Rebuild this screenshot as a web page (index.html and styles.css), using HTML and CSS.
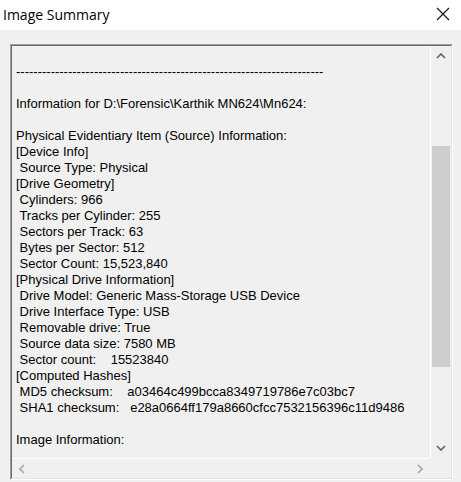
FILE: index.html
```html
<!DOCTYPE html>
<html>
<head>
<meta charset="utf-8">
<link rel="stylesheet" href="styles.css">
</head>
<body>
<div class="titlebar">
  <span class="title">Image Summary</span>
  <svg class="close" width="14" height="14" viewBox="0 0 14 14"><path d="M1 1 L13 13 M13 1 L1 13" stroke="#111" stroke-width="1.1" fill="none"/></svg>
</div>
<div class="body">
  <div class="box">
    <div class="inner">
<pre class="content">

-----------------------------------------------------------------------

Information for D:\Forensic\Karthik MN624\Mn624:

Physical Evidentiary Item (Source) Information:
[Device Info]
 Source Type: Physical
[Drive Geometry]
 Cylinders: 966
 Tracks per Cylinder: 255
 Sectors per Track: 63
 Bytes per Sector: 512
 Sector Count: 15,523,840
[Physical Drive Information]
 Drive Model: Generic Mass-Storage USB Device
 Drive Interface Type: USB
 Removable drive: True
 Source data size: 7580 MB
 Sector count:    15523840
[Computed Hashes]
 MD5 checksum:    a03464c499bcca8349719786e7c03bc7
 SHA1 checksum:   e28a0664ff179a8660cfcc7532156396c11d9486

Image Information:
</pre>
      <div class="vscroll">
        <div class="btn"><svg width="10" height="6" viewBox="0 0 10 6"><path d="M1 5 L5 1 L9 5" stroke="#606060" stroke-width="1.6" fill="none"/></svg></div>
        <div class="thumb"></div>
        <div class="btn down"><svg width="10" height="6" viewBox="0 0 10 6"><path d="M1 1 L5 5 L9 1" stroke="#606060" stroke-width="1.6" fill="none"/></svg></div>
      </div>
      <div class="hscroll">
        <div class="hbtn"><svg width="6" height="10" viewBox="0 0 6 10"><path d="M5 1 L1 5 L5 9" stroke="#a8a8a8" stroke-width="1.6" fill="none"/></svg></div>
        <div class="hbtn"><svg width="6" height="10" viewBox="0 0 6 10"><path d="M1 1 L5 5 L1 9" stroke="#a8a8a8" stroke-width="1.6" fill="none"/></svg></div>
      </div>
      <div class="corner"></div>
    </div>
  </div>
</div>
</body>
</html>
```

FILE: styles.css
```css
html, body {
  margin: 0;
  padding: 0;
  background: #f0f0f0;
}
body {
  width: 461px;
  height: 482px;
  overflow: hidden;
}
.titlebar {
  height: 30px;
  background: #ffffff;
  display: flex;
  align-items: center;
  justify-content: space-between;
  padding: 0 11px 0 3px;
}
.title {
  font-family: "Open Sans", "Noto Sans", sans-serif;
  font-size: 14px;
  color: #000;
  margin-top: -1px;
}
.close {
  display: block;
  margin-top: -2px;
}
.body {
  padding: 14px 8px 2px 10px;
}
.box {
  border-style: solid;
  border-width: 1px;
  border-color: #a0a0a0 #ffffff #ffffff #a0a0a0;
}
.inner {
  border-style: solid;
  border-width: 1px;
  border-color: #696969 #e3e3e3 #e3e3e3 #696969;
  height: 432px;
  display: grid;
  grid-template-columns: 1fr 21px;
  grid-template-rows: 1fr 20px;
  background: #f0f0f0;
}
.content {
  margin: 0;
  padding: 2px 0 0 4px;
  font-family: "Liberation Sans", Arial, sans-serif;
  font-size: 13px;
  line-height: 16px;
  color: #000;
  white-space: pre;
  overflow: hidden;
  min-width: 0;
}
.vscroll {
  border-left: 1px solid #ffffff;
  display: flex;
  flex-direction: column;
  align-items: center;
}
.btn {
  height: 20px;
  width: 20px;
  display: flex;
  align-items: center;
  justify-content: center;
}
.btn.down {
  margin-top: auto;
}
.thumb {
  margin-top: 80px;
  width: 18px;
  height: 221px;
  background: #cdcdcd;
}
.hscroll {
  border-top: 1px solid #ffffff;
  display: flex;
  justify-content: space-between;
  align-items: center;
}
.hbtn {
  width: 20px;
  height: 19px;
  display: flex;
  align-items: center;
  justify-content: center;
}
.corner {
  background: #f0f0f0;
}
```
